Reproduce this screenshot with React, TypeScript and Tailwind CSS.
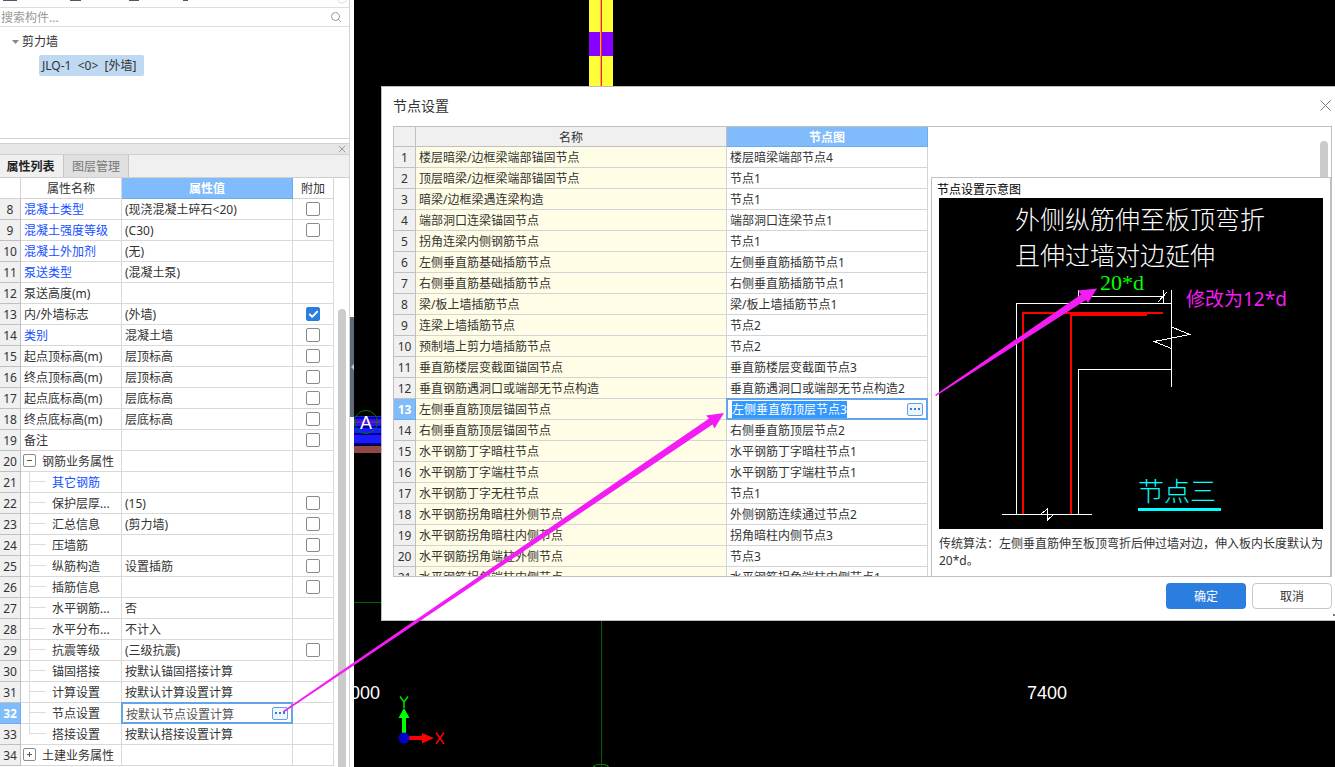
import { useState } from "react";
import { Check, Search, X } from "lucide-react";

interface PropertyRow {
  no: number;
  name: string;
  value?: string;
  check?: boolean;
  link?: boolean;
  group?: "open" | "closed";
  child?: boolean;
  last?: boolean;
}

const PROPERTIES: PropertyRow[] = [
  { no: 8, name: "混凝土类型", value: "(现浇混凝土碎石<20)", check: false, link: true },
  { no: 9, name: "混凝土强度等级", value: "(C30)", check: false, link: true },
  { no: 10, name: "混凝土外加剂", value: "(无)", link: true },
  { no: 11, name: "泵送类型", value: "(混凝土泵)", link: true },
  { no: 12, name: "泵送高度(m)" },
  { no: 13, name: "内/外墙标志", value: "(外墙)", check: true },
  { no: 14, name: "类别", value: "混凝土墙", check: false, link: true },
  { no: 15, name: "起点顶标高(m)", value: "层顶标高", check: false },
  { no: 16, name: "终点顶标高(m)", value: "层顶标高", check: false },
  { no: 17, name: "起点底标高(m)", value: "层底标高", check: false },
  { no: 18, name: "终点底标高(m)", value: "层底标高", check: false },
  { no: 19, name: "备注", check: false },
  { no: 20, name: "钢筋业务属性", group: "open" },
  { no: 21, name: "其它钢筋", link: true, child: true },
  { no: 22, name: "保护层厚...", value: "(15)", check: false, child: true },
  { no: 23, name: "汇总信息", value: "(剪力墙)", check: false, child: true },
  { no: 24, name: "压墙筋", check: false, child: true },
  { no: 25, name: "纵筋构造", value: "设置插筋", check: false, child: true },
  { no: 26, name: "插筋信息", check: false, child: true },
  { no: 27, name: "水平钢筋...", value: "否", child: true },
  { no: 28, name: "水平分布...", value: "不计入", child: true },
  { no: 29, name: "抗震等级", value: "(三级抗震)", check: false, child: true },
  { no: 30, name: "锚固搭接", value: "按默认锚固搭接计算", child: true },
  { no: 31, name: "计算设置", value: "按默认计算设置计算", child: true },
  { no: 32, name: "节点设置", value: "按默认节点设置计算", child: true },
  { no: 33, name: "搭接设置", value: "按默认搭接设置计算", child: true, last: true },
  { no: 34, name: "土建业务属性", group: "closed" },
];

const NODES = [
  ["楼层暗梁/边框梁端部锚固节点", "楼层暗梁端部节点4"],
  ["顶层暗梁/边框梁端部锚固节点", "节点1"],
  ["暗梁/边框梁遇连梁构造", "节点1"],
  ["端部洞口连梁锚固节点", "端部洞口连梁节点1"],
  ["拐角连梁内侧钢筋节点", "节点1"],
  ["左侧垂直筋基础插筋节点", "左侧垂直筋插筋节点1"],
  ["右侧垂直筋基础插筋节点", "右侧垂直筋插筋节点1"],
  ["梁/板上墙插筋节点", "梁/板上墙插筋节点1"],
  ["连梁上墙插筋节点", "节点2"],
  ["预制墙上剪力墙插筋节点", "节点2"],
  ["垂直筋楼层变截面锚固节点", "垂直筋楼层变截面节点3"],
  ["垂直钢筋遇洞口或端部无节点构造", "垂直筋遇洞口或端部无节点构造2"],
  ["左侧垂直筋顶层锚固节点", "左侧垂直筋顶层节点3"],
  ["右侧垂直筋顶层锚固节点", "右侧垂直筋顶层节点2"],
  ["水平钢筋丁字暗柱节点", "水平钢筋丁字暗柱节点1"],
  ["水平钢筋丁字端柱节点", "水平钢筋丁字端柱节点1"],
  ["水平钢筋丁字无柱节点", "节点1"],
  ["水平钢筋拐角暗柱外侧节点", "外侧钢筋连续通过节点2"],
  ["水平钢筋拐角暗柱内侧节点", "拐角暗柱内侧节点3"],
  ["水平钢筋拐角端柱外侧节点", "节点3"],
  ["水平钢筋拐角端柱内侧节点", "水平钢筋拐角端柱内侧节点1"],
];

const SELECTED_PROPERTY = 32;
const SELECTED_NODE = 13;

const EDIT_CELL =
  "relative border-r border-b border-[#64a5e8] p-0 after:pointer-events-none after:absolute after:-inset-px after:border-2 after:border-[#64a5e8]";

const numberCell = (selected: boolean) =>
  `border-r border-b p-0 pt-[2px] text-center ${
    selected
      ? "border-[#6cabec] bg-[#80bbfb] font-bold text-white"
      : "border-[#c0c0c0] bg-[#f0f0f0]"
  }`;

const MoreButton = ({ label }: { label: string }) => (
  <button
    aria-label={label}
    className="flex h-[13px] w-4 shrink-0 items-center justify-center gap-px rounded-xs border border-[#5fa3e6] bg-[#eef5fd]"
  >
    <span className="size-[2px] bg-[#2b7de0]" />
    <span className="mx-px size-[2px] bg-[#2b7de0]" />
    <span className="size-[2px] bg-[#2b7de0]" />
  </button>
);

const CheckCell = ({ label, initial }: { label: string; initial: boolean }) => {
  const [checked, setChecked] = useState(initial);
  return (
    <span className="mx-auto grid size-[14px]">
      <input
        type="checkbox"
        aria-label={label}
        checked={checked}
        onChange={(e) => setChecked(e.target.checked)}
        className="col-start-1 row-start-1 size-[14px] appearance-none rounded-xs border border-[#8a8a8a] bg-white checked:border-[#2b7de0] checked:bg-[#2b7de0]"
      />
      {checked && (
        <Check
          strokeWidth={4}
          className="pointer-events-none col-start-1 row-start-1 m-auto size-[11px] text-white"
        />
      )}
    </span>
  );
};

const TreeLine = ({ last }: { last?: boolean }) => (
  <span className="mr-[6px] ml-2 flex h-5 w-[17px] shrink-0 flex-col">
    <span className="h-[10px] border-b border-l border-[#dcdcdc]" />
    {!last && <span className="h-[10px] border-l border-[#dcdcdc]" />}
  </span>
);

const PropertyName = ({ row }: { row: PropertyRow }) => {
  if (row.group) {
    return (
      <div className="flex h-5 gap-[6px] pl-[2px] leading-[22px]">
        <button
          aria-label={row.name}
          aria-expanded={row.group === "open"}
          className="mt-[3px] flex size-[13px] items-center justify-center rounded-xs border border-[#8a8a8a] bg-white"
        >
          <svg viewBox="0 0 7 7" className="size-[7px]" stroke="#555" shapeRendering="crispEdges">
            <path d={row.group === "open" ? "M1 3.5H6" : "M1 3.5H6M3.5 1V6"} />
          </svg>
        </button>
        {row.name}
      </div>
    );
  }
  return (
    <div
      className={`flex h-5 leading-[22px] ${row.link ? "text-[#1450ff]" : ""} ${row.child ? "" : "pl-[3px]"}`}
    >
      {row.child && <TreeLine last={row.last} />}
      {row.name}
    </div>
  );
};

const PropertyTable = () => (
  <table className="w-[334px] table-fixed border-separate border-spacing-0 self-start leading-[18px]">
    <colgroup>
      <col className="w-[21px]" />
      <col className="w-[101px]" />
      <col className="w-[171px]" />
      <col className="w-[41px]" />
    </colgroup>
    <thead>
      <tr className="h-[21px]">
        <th className="border-r border-b border-[#d4d4d4] p-0" />
        <th className="border-r border-b border-[#d4d4d4] p-0 pt-[2px] font-normal">属性名称</th>
        <th className="border-r border-b border-[#6cabec] bg-[#80bbfb] p-0 pt-[2px] font-bold text-white">
          属性值
        </th>
        <th className="border-r border-b border-[#d4d4d4] p-0 pt-[2px] font-normal">附加</th>
      </tr>
    </thead>
    <tbody>
      {PROPERTIES.map((row) => {
        const selected = row.no === SELECTED_PROPERTY;
        return (
          <tr key={row.no} className="h-[21px]">
            <td className={numberCell(selected)}>{row.no}</td>
            <td className="overflow-hidden border-r border-b border-[#d9d9d9] p-0 whitespace-nowrap">
              <PropertyName row={row} />
            </td>
            {selected ? (
              <td className={EDIT_CELL}>
                <div className="flex h-5 items-center pr-1 pl-1">
                  <input
                    aria-label={row.name}
                    defaultValue={row.value}
                    className="h-5 min-w-0 flex-1 pt-[2px] text-[#555] outline-none"
                  />
                  <MoreButton label="节点设置..." />
                </div>
              </td>
            ) : (
              <td className="border-r border-b border-[#d9d9d9] p-0 pt-[2px] pl-[3px] whitespace-nowrap">
                {row.value}
              </td>
            )}
            <td className="border-r border-b border-[#d9d9d9] p-0">
              {row.check !== undefined && <CheckCell label={row.name} initial={row.check} />}
            </td>
          </tr>
        );
      })}
    </tbody>
  </table>
);

const LeftPanel = () => (
  <aside className="flex h-full w-[350px] shrink-0 flex-col overflow-hidden border-r border-[#d4d4d4] bg-white">
    <svg className="h-[7px] w-full shrink-0" fill="#50566b">
      <path d="M3 0H17V1H3zM70 0H81V1H70zM129 0H139V1H129zM183 0H188V1H183z" />
      <circle cx="342" cy="-2" r="5" fill="none" stroke="#ddd" />
    </svg>
    <div className="flex h-5 shrink-0 items-center border-y border-[#dedede] pr-[7px]">
      <input
        aria-label="搜索构件"
        placeholder="搜索构件..."
        className="h-[18px] min-w-0 flex-1 pl-px outline-none placeholder:text-[#999]"
      />
      <button aria-label="搜索">
        <Search className="size-3 text-[#999]" />
      </button>
    </div>
    <div className="h-28 shrink-0 border-b border-[#d4d4d4] pt-[5px]">
      <div className="flex h-5 items-center gap-[3px] pl-3">
        <svg viewBox="0 0 7 4" className="h-1 w-[7px]" fill="#888">
          <path d="M0 0H7L3.5 4z" />
        </svg>
        <span className="leading-5">剪力墙</span>
      </div>
      <div className="mt-[3px] ml-[39px] h-[21px] w-[105px] rounded-xs bg-[#c0d9f3] pl-[3px] leading-[22px] whitespace-pre">
        {"JLQ-1  <0>  [外墙]"}
      </div>
    </div>
    <div className="mt-1 flex h-3 shrink-0 items-center justify-end border-y border-[#d0d0d0] bg-[#e6e6e6] pr-px">
      <button aria-label="关闭">
        <X strokeWidth={2} className="size-3 text-[#999]" />
      </button>
    </div>
    <div className="flex h-[23px] shrink-0 border-b border-[#d0d0d0] bg-[#f0f0f0]">
      <button className="w-16 border-r border-[#c6c6c6] pt-[2px] pr-[2px] font-bold text-[#222]">
        属性列表
      </button>
      <button className="w-[65px] border-r border-[#c6c6c6] bg-[#e0e0e0] pt-[2px] text-[#777]">
        图层管理
      </button>
    </div>
    <div className="flex min-h-0 flex-1 gap-1 overflow-hidden">
      <PropertyTable />
      <div className="mt-[131px] w-2 rounded-t-full bg-[#cbcbcb]" />
    </div>
  </aside>
);

const DrawingCanvas = () => (
  <svg
    className="absolute inset-0 h-full w-full font-['Liberation_Sans',sans-serif]"
    shapeRendering="crispEdges"
  >
    <rect x="235" y="0" width="24" height="90" fill="#ffff38" />
    <rect x="235" y="32" width="24" height="24" fill="#8800ff" />
    <rect x="246" y="0" width="1" height="90" fill="#ffb040" />
    <rect x="247" y="0" width="1" height="90" fill="#ff2020" />

    <rect x="0" y="416" width="40" height="29" fill="#1a1aff" />
    <path d="M0 418H40M0 426.5H40M0 434H40M0 443.5H40" stroke="#00008b" strokeWidth="2" />
    <rect x="0" y="421" width="40" height="2" fill="#8a1090" />
    <rect x="0" y="446" width="40" height="7" fill="#924646" />
    <g shapeRendering="auto">
      <circle cx="12" cy="422" r="11.5" fill="none" stroke="#007800" />
      <text x="12" y="429" fontSize="18" fill="#fff" textAnchor="middle">A</text>
    </g>

    <path d="M0 602.5H30M247.5 620V767" stroke="#006400" />
    <circle cx="247" cy="776" r="12" fill="none" stroke="#007800" />

    <text x="-4" y="699" fontSize="18" fill="#fff">000</text>
    <text x="673" y="699" fontSize="18" fill="#fff">7400</text>

    <g shapeRendering="auto">
      <path d="M48 738V718H44.500L50 708L55.500 718H52V738z" fill="#00ff00" />
      <path d="M50 736H68V733L80 738L68 743.500V740H50z" fill="#ff0000" />
      <circle cx="50" cy="738" r="5.500" fill="#0000c8" />
      <path d="M46 696.500L50 702L54 696.500M50 702V708" stroke="#00e000" strokeWidth="1.500" fill="none" />
      <path d="M82 732.500L90 744M90 732.500L82 744" stroke="#ff0000" strokeWidth="1.500" fill="none" />
    </g>
  </svg>
);

const NodeDiagram = () => (
  <svg
    viewBox="0 0 384 331"
    className="w-full bg-black font-['Noto_Sans_CJK_SC',sans-serif] font-light"
    fill="none"
    stroke="#fff"
  >
    <g stroke="none" fill="#fff" fontSize="25">
      <text x="76" y="31">外侧纵筋伸至板顶弯折</text>
      <text x="76" y="67">且伸过墙对边延伸</text>
    </g>
    <text
      x="161"
      y="92"
      fontSize="22"
      stroke="none"
      fill="#00ff00"
      className="font-['Liberation_Serif',serif]"
    >
      20*d
    </text>
    <g shapeRendering="crispEdges">
      <path d="M77.500 316V105.500H232.500M232.500 92V189M139.500 316V171.500H232.500" />
      <path d="M139.500 92V105M224.500 92V105M139.500 98.500H224.500M63 316.500H153" />
      <path d="M84 316V115H224M132 316V117H208" stroke="#ff0000" strokeWidth="2" />
      <path d="M219 104L228 94M232.500 129L251 136.500L215 143.500L232.500 150.500" />
      <path d="M102 316L108.500 311V322L115 316" />
    </g>
    <text x="199" y="303" fontSize="26" stroke="none" fill="#00ffff">节点三</text>
    <path d="M199 311.500H282" stroke="#00ffff" strokeWidth="3" />
  </svg>
);

const NodeTable = () => (
  <table className="w-[534px] table-fixed border-separate border-spacing-0 leading-[18px]">
    <colgroup>
      <col className="w-[22px]" />
      <col className="w-[311px]" />
      <col className="w-[201px]" />
    </colgroup>
    <thead>
      <tr className="h-5 leading-[17px]">
        <th className="border-r border-b border-[#c0c0c0] bg-[#f0f0f0] p-0" />
        <th className="border-r border-b border-[#c0c0c0] bg-[#f0f0f0] p-0 pt-[2px] font-normal">
          名称
        </th>
        <th className="border-r border-b border-[#6cabec] bg-[#80bbfb] p-0 pt-[2px] font-bold text-white">
          节点图
        </th>
      </tr>
    </thead>
    <tbody>
      {NODES.map(([name, node], i) => {
        const selected = i + 1 === SELECTED_NODE;
        return (
          <tr key={name} className="h-[21px]">
            <td className={numberCell(selected)}>{i + 1}</td>
            <td className="border-r border-b border-[#d4d4d4] bg-[#fffde6] p-0 pt-[2px] pl-[3px] whitespace-nowrap">
              {name}
            </td>
            {selected ? (
              <td className={EDIT_CELL}>
                <div className="flex h-5 items-center justify-between pr-1 pl-[5px]">
                  <input
                    aria-label={name}
                    defaultValue={node}
                    className="field-sizing-content h-[17px] bg-[#3399ff] leading-[17px] text-white outline-none"
                  />
                  <MoreButton label="选择节点" />
                </div>
              </td>
            ) : (
              <td className="border-r border-b border-[#d4d4d4] p-0 pt-[2px] pl-[3px] whitespace-nowrap">
                {node}
              </td>
            )}
          </tr>
        );
      })}
    </tbody>
  </table>
);

const NodeDialog = () => (
  <section
    role="dialog"
    aria-labelledby="node-dialog-title"
    className="absolute top-[86px] right-0 left-[27px] border-y border-l border-[#bdbdbd] bg-white pr-[3px] pl-[11px]"
  >
    <header className="flex h-[39px] items-center justify-between pb-[2px]">
      <h2 id="node-dialog-title" className="text-sm">
        节点设置
      </h2>
      <button aria-label="关闭" className="mr-px">
        <svg viewBox="0 0 11 11" className="size-[11px]" stroke="#777">
          <path d="M0.500 0.500L10.500 10.500M10.500 0.500L0.500 10.500" />
        </svg>
      </button>
    </header>
    <div className="flex h-[451px] overflow-hidden border border-[#c0c0c0]">
      <div className="shrink-0">
        <NodeTable />
      </div>
      <div className="ml-[3px] flex min-w-0 flex-1 flex-col">
        <div className="flex h-[50px] shrink-0 justify-end pt-[14px] pr-[3px]">
          <div className="w-2 rounded-t-full bg-[#cbcbcb]" />
        </div>
        <div className="flex-1 border-x border-t border-[#c0c0c0] px-[7px]">
          <h3 className="-ml-[2px] h-5 leading-6 text-black">节点设置示意图</h3>
          <NodeDiagram />
          <p className="mt-[6px] leading-[17px]">
            传统算法：左侧垂直筋伸至板顶弯折后伸过墙对边，伸入板内长度默认为20*d。
          </p>
        </div>
      </div>
    </div>
    <footer className="flex h-[43px] justify-end gap-[6px] pt-[6px]">
      <button className="h-[26px] w-20 rounded-sm bg-[#2b7de0] pt-[2px] text-white">确定</button>
      <button className="h-[26px] w-20 rounded-sm border border-[#c6c6c6] bg-white pt-[2px]">
        取消
      </button>
    </footer>
    <span className="absolute right-0 bottom-1 size-[2px] bg-[#777]" />
  </section>
);

// Markup drawn on top of the whole window
const Annotations = () => (
  <svg
    className="pointer-events-none absolute inset-0 h-full w-full font-['Noto_Sans','Noto_Sans_CJK_SC',sans-serif]"
    fill="#f41cf4"
  >
    <path d="M283 711L709 418.500L706 415.500L724 413L714.500 428.500L712.500 424.500L283 713z" />
    <path d="M935 395L1081 294.500L1078 290.500L1097 288.500L1088 303L1086 300L936 396z" />
    <text x="1186" y="306" fontSize="19">修改为12*d</text>
  </svg>
);

const App = () => (
  <div className="relative flex h-screen w-full overflow-hidden bg-white font-['Noto_Sans','Noto_Sans_CJK_SC',sans-serif] text-xs text-[#333]">
    <LeftPanel />
    <div className="w-1 shrink-0 pt-[317px]">
      <button
        aria-label="收起面板"
        className="flex h-[100px] w-1 items-center justify-center bg-[#5f6b78]"
      >
        <svg viewBox="0 0 4 6" className="h-[6px] w-1" fill="#c4cad0">
          <path d="M4 0V6L1 3z" />
        </svg>
      </button>
    </div>
    <main className="relative min-w-0 flex-1 overflow-hidden bg-black">
      <DrawingCanvas />
      <NodeDialog />
    </main>
    <Annotations />
  </div>
);

export default App;
